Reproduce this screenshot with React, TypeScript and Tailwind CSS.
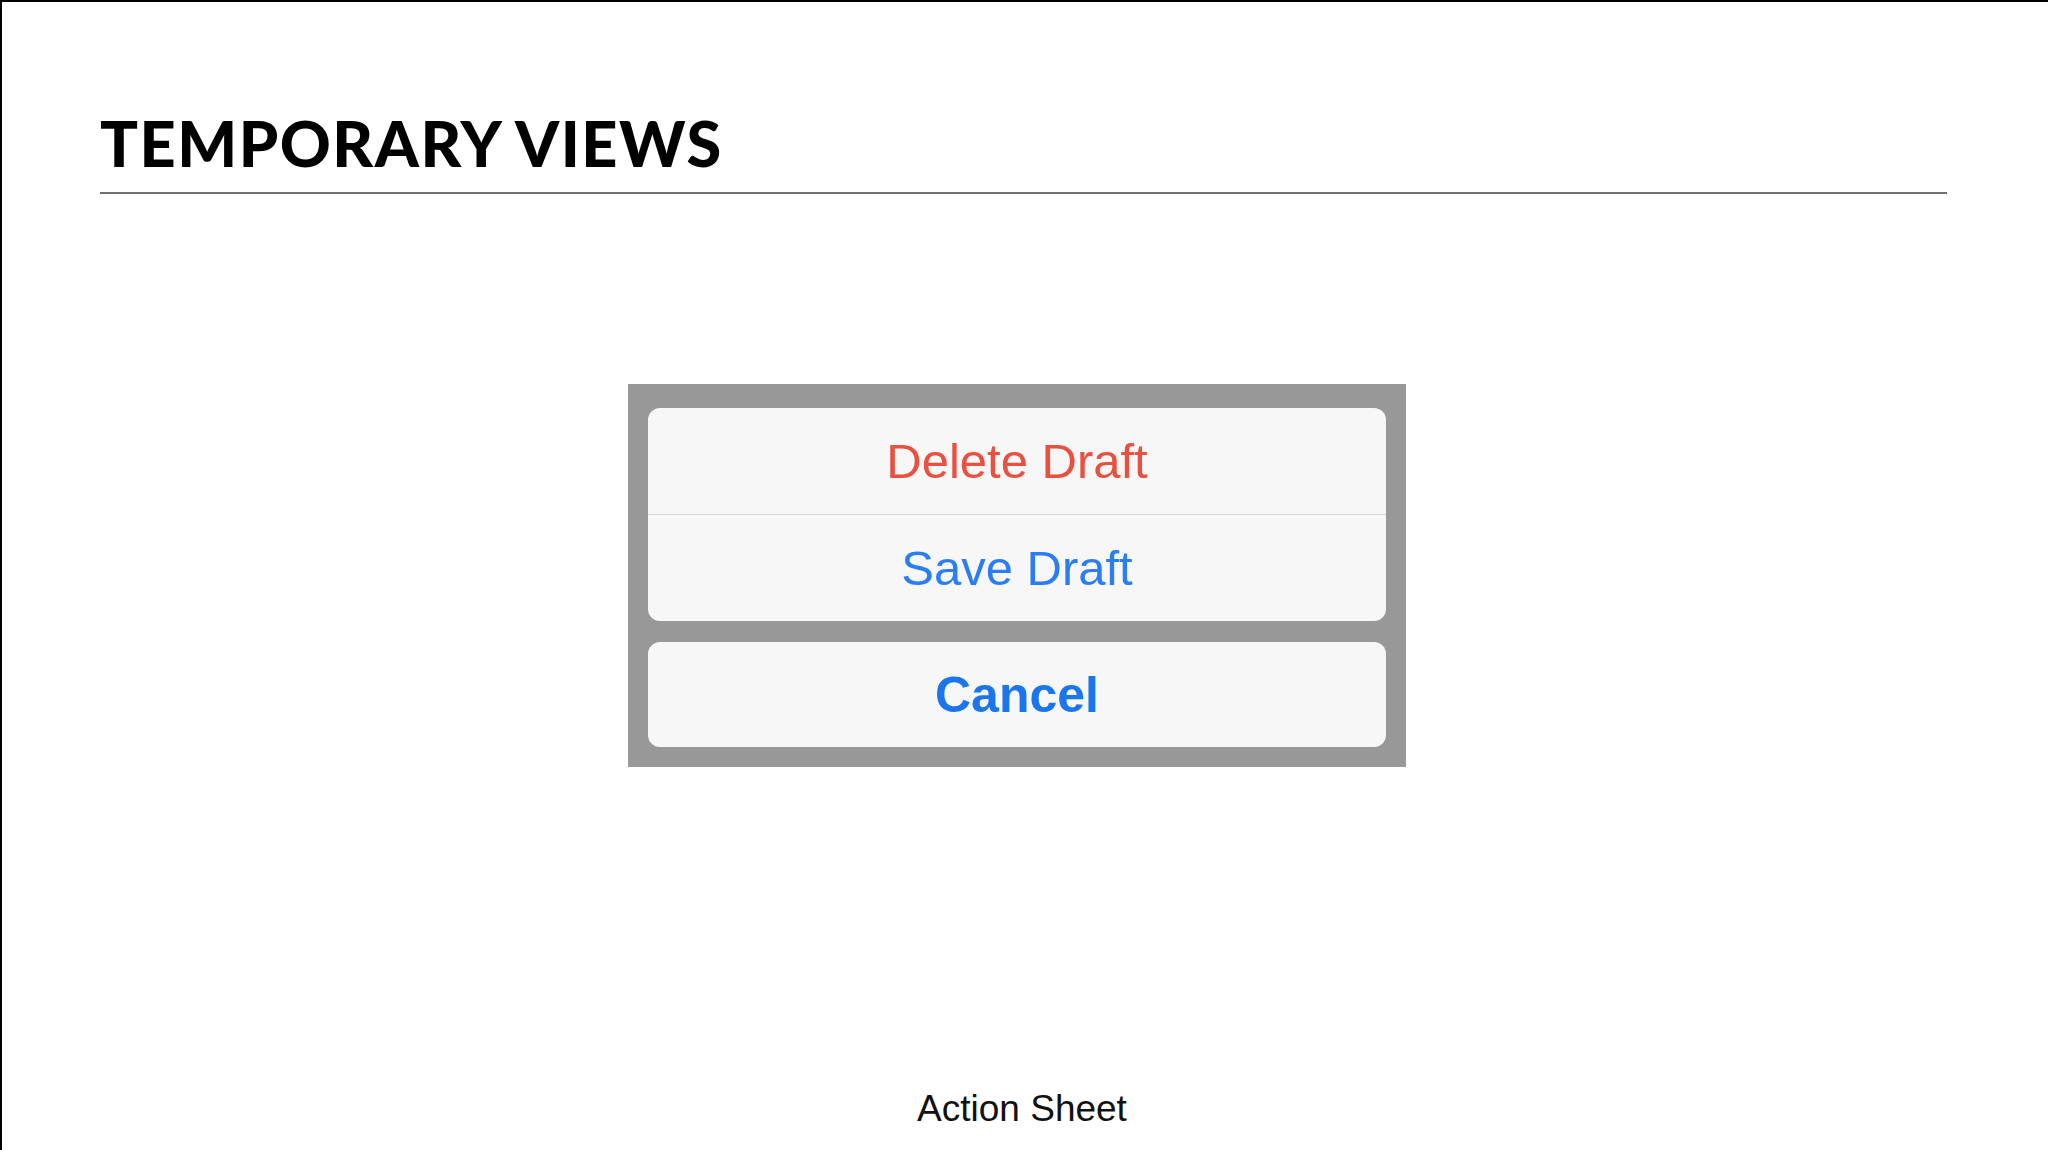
const sans = { fontFamily: '"Liberation Sans", Arial, sans-serif' };

export default function App() {
  return (
    <div className="w-[2048px] h-[1150px] overflow-hidden bg-white border-t-2 border-l-2 border-black flex flex-col">
      {/* Slide header */}
      <div className="pl-[98px] pr-[101px] pt-[109px]">
        <h1 className="text-[63px] leading-none font-black text-black tracking-[1.5px]" style={{ fontFamily: 'Lato, "Noto Sans", sans-serif' }}>
          TEMPORARY VIEWS
        </h1>
        <div className="mt-[18px] h-[2px] bg-[#707070]" />
      </div>

      {/* Action sheet mock */}
      <div className="pl-[626px] mt-[190px]">
        <div className="w-[778px] bg-[#989898] pt-[24px] px-[20px] pb-[20px] flex flex-col gap-[21px]" style={sans}>
          <div className="rounded-[12px] bg-[#f7f7f7] flex flex-col overflow-hidden">
            <div className="h-[106px] flex items-center justify-center text-[49px] leading-none text-[#e9503f]">
              Delete Draft
            </div>
            <div className="h-px bg-[#d6d6d8]" />
            <div className="h-[106px] flex items-center justify-center text-[49px] leading-none text-[#2a7df3]">
              Save Draft
            </div>
          </div>
          <div className="h-[105px] rounded-[12px] bg-[#f7f7f7] flex items-center justify-center text-[50px] leading-none font-bold text-[#1b76ee]">
            Cancel
          </div>
        </div>
      </div>

      {/* Caption */}
      <div className="mt-[323px] pr-[6px] text-center text-[37px] leading-none text-[#111]" style={sans}>
        Action Sheet
      </div>
    </div>
  );
}
